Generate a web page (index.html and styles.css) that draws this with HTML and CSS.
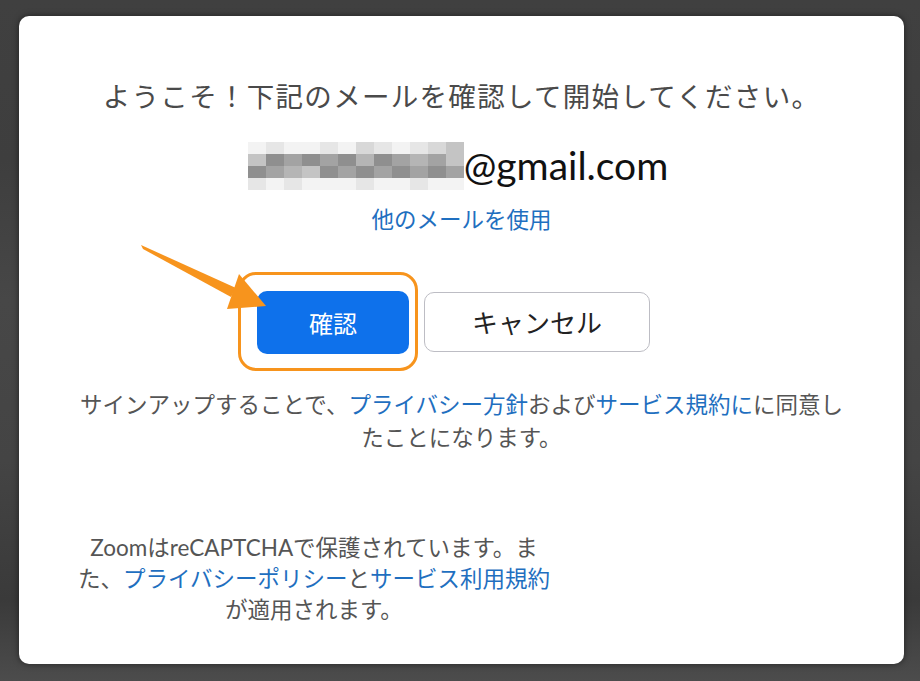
FILE: index.html
```html
<!DOCTYPE html>
<html lang="ja">
<head>
    <meta charset="UTF-8">
    <title>Zoom サインアップ</title>
    <link rel="stylesheet" href="styles.css">
</head>
<body>
    <div class="backdrop">
        <div class="modal">
            <h1 class="title">ようこそ！下記のメールを確認して開始してください。</h1>

            <div class="email">
                <div class="mosaic">
                    <span class="c1"></span><span class="c2"></span><span class="c1"></span><span class="c1"></span><span class="c2"></span><span class="c1"></span><span class="c3"></span><span class="c2"></span><span class="c1"></span><span class="c2"></span><span class="c3"></span><span class="c4"></span>
                    <span class="c4"></span><span class="c6"></span><span class="c5"></span><span class="c6"></span><span class="c5"></span><span class="c6"></span><span class="c7"></span><span class="c6"></span><span class="c5"></span><span class="c7"></span><span class="c5"></span><span class="c4"></span>
                    <span class="c6"></span><span class="c5"></span><span class="c7"></span><span class="c4"></span><span class="c6"></span><span class="c5"></span><span class="c6"></span><span class="c5"></span><span class="c6"></span><span class="c5"></span><span class="c6"></span><span class="c5"></span>
                    <span class="c2"></span><span class="c1"></span><span class="c2"></span><span class="c1"></span><span class="c1"></span><span class="c1"></span><span class="c2"></span><span class="c1"></span><span class="c1"></span><span class="c2"></span><span class="c1"></span><span class="c1"></span>
                </div>
                <span class="domain">@gmail.com</span>
            </div>

            <a class="link other-mail" href="#">他のメールを使用</a>

            <div class="actions">
                <div class="highlight">
                    <button type="button" class="btn-confirm">確認</button>
                </div>
                <button type="button" class="btn-cancel">キャンセル</button>
            </div>

            <p class="terms">
                サインアップすることで、<a class="link" href="#">プライバシー方針</a>および<a class="link" href="#">サービス規約に</a>に同意し<br>たことになります。
            </p>

            <p class="captcha">
                ZoomはreCAPTCHAで保護されています。ま<br>た、<a class="link" href="#">プライバシーポリシー</a>と<a class="link" href="#">サービス利用規約</a><br>が適用されます。
            </p>
        </div>
    </div>

    <!-- annotation arrow -->
    <svg class="arrow" width="920" height="681" viewBox="0 0 920 681">
        <polygon points="141,245 143,249 231,297 236,288" fill="#f7941d"/>
        <polygon points="239,274 266,306 227,309" fill="#f7941d"/>
    </svg>
</body>
</html>
```

FILE: styles.css
```css
:root {
    --link: #1f6fc0;
    --text: #4a4a4a;
    --orange: #f7941d;
}
body {
    margin: 0;
    width: 920px;
    height: 681px;
    overflow: hidden;
    font-family: Lato, "Noto Sans CJK JP", sans-serif;
    background: linear-gradient(to bottom, #404040 0, #3e3e3e 160px, #474747 300px, #444 460px, #3a3a3a 600px, #4c4c4c 681px);
}
.backdrop {
    padding: 16px 16px 0 19px;
}
.modal {
    width: 885px;
    height: 648px;
    box-sizing: border-box;
    background: white;
    border-radius: 10px;
    box-shadow: 0 0 6px rgba(0,0,0,0.5);
    padding-top: 62px;
    display: flex;
    flex-direction: column;
    align-items: center;
}
.title {
    margin: 0;
    font-size: 27.5px;
    font-weight: 400;
    line-height: 38px;
    color: var(--text);
    letter-spacing: 1.3px;
}
.email {
    margin-top: 24px;
    display: flex;
    align-items: center;
    margin-right: 7px;
}
.mosaic {
    display: grid;
    grid-template-columns: repeat(12, 18px);
    grid-template-rows: 12px 12px 12px 12px;
    margin-top: 2px;
}
.mosaic .c1 { background: #f3f3f3; }
.mosaic .c2 { background: #e6e6e6; }
.mosaic .c3 { background: #d8d8d8; }
.mosaic .c4 { background: #c4c4c4; }
.mosaic .c5 { background: #a3a3a3; }
.mosaic .c6 { background: #8f8f8f; }
.mosaic .c7 { background: #b5b5b5; }
.domain {
    font-size: 39px;
    line-height: 48px;
    color: #111;
}
.link {
    color: var(--link);
    text-decoration: none;
}
.other-mail {
    margin-top: 15px;
    font-size: 22.5px;
    line-height: 30px;
}
.actions {
    margin-top: 37px;
    display: flex;
    align-items: center;
    gap: 6px;
    padding-right: 35px;
}
.highlight {
    border: 3px solid var(--orange);
    border-radius: 18px;
    padding: 16px 6px 14px 16px;
}
.btn-confirm {
    display: block;
    width: 152px;
    height: 63px;
    border: none;
    border-radius: 10px;
    background: #0e71eb;
    color: white;
    font-family: inherit;
    font-size: 24px;
}
.btn-cancel {
    width: 226px;
    height: 60px;
    border: 1px solid #bdbdc4;
    border-radius: 10px;
    background: white;
    color: #222;
    font-family: inherit;
    font-size: 26px;
}
.terms {
    margin: 17px 0 0;
    font-size: 22.5px;
    line-height: 33px;
    color: #555;
    text-align: center;
}
.captcha {
    align-self: flex-start;
    margin: 78px 0 0 45px;
    width: 500px;
    font-size: 22.5px;
    line-height: 31px;
    color: #555;
    text-align: center;
}
.arrow {
    position: absolute;
    top: 0;
    left: 0;
    pointer-events: none;
}
```
